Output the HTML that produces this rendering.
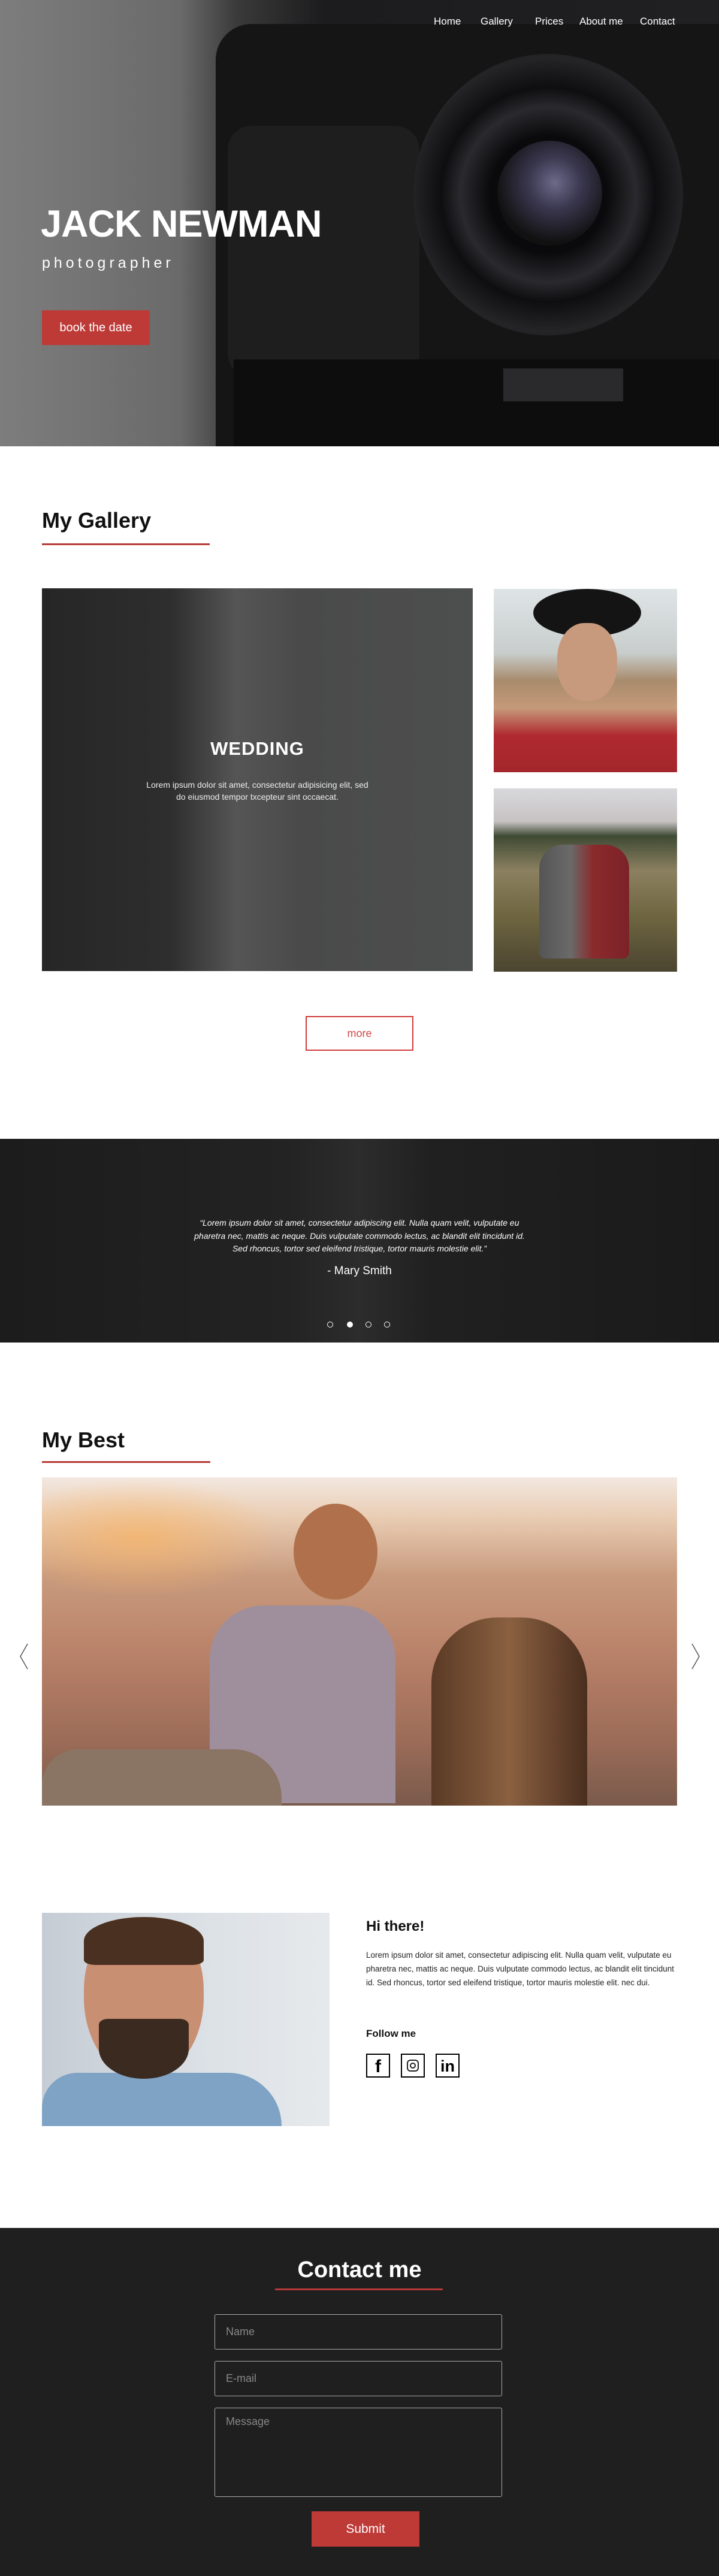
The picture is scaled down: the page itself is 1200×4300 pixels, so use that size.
<!DOCTYPE html>
<html><head><meta charset="utf-8"><style>
*{margin:0;padding:0;box-sizing:border-box}
body{width:1200px;height:4300px;position:relative;background:#fff;font-family:"Liberation Sans",sans-serif;overflow:hidden}
.a{position:absolute}
.hero{left:0;top:0;width:1200px;height:745px;background:linear-gradient(90deg,#7d7d7d 0%,#6a6a6a 25%,#3a3a3a 33%,#1c1c1e 45%,#202022 100%);overflow:hidden}
.nav{top:26px;color:#fff;font-size:17px}
.h2{font-size:36px;font-weight:bold;color:#111}
.ul{height:3px;background:#b73a36}
</style></head><body>
<div class="a hero">
  <div class="a" style="left:360px;top:40px;width:900px;height:720px;background:#151516;border-radius:60px 0 0 0"></div>
  <div class="a" style="left:380px;top:210px;width:320px;height:420px;background:#1e1e1f;border-radius:40px"></div>
  <div class="a" style="left:690px;top:90px;width:450px;height:470px;border-radius:50%;background:radial-gradient(circle,#0a0a0c 30%,#2a2a2e 45%,#0e0e10 55%,#242426 70%,#101012 100%)"></div>
  <div class="a" style="left:830px;top:235px;width:175px;height:175px;border-radius:50%;background:radial-gradient(circle at 55% 40%,#6d6a8a 0%,#3b3850 30%,#111 70%)"></div>
  <div class="a" style="left:390px;top:600px;width:810px;height:145px;background:#0d0d0e"></div>
  <div class="a" style="left:840px;top:615px;width:200px;height:55px;background:#2a2a2c"></div>
  <div class="a nav" style="left:724px">Home</div>
  <div class="a nav" style="left:802px">Gallery</div>
  <div class="a nav" style="left:893px">Prices</div>
  <div class="a nav" style="left:967px">About me</div>
  <div class="a nav" style="left:1068px">Contact</div>
  <div class="a" style="left:68px;top:338px;color:#fff;font-size:63px;font-weight:bold;letter-spacing:-1px">JACK NEWMAN</div>
  <div class="a" style="left:70px;top:425px;color:#fff;font-size:25px;letter-spacing:6px">photographer</div>
  <div class="a" style="left:70px;top:518px;width:180px;height:58px;background:#bd3a37;color:#fff;font-size:20px;line-height:58px;text-align:center">book the date</div>
</div>

<div class="a h2" style="left:70px;top:848px">My Gallery</div>
<div class="a ul" style="left:70px;top:907px;width:280px"></div>
<div class="a" style="left:70px;top:982px;width:719px;height:639px;background:linear-gradient(90deg,#262626 0%,#2e2e2e 30%,#555 45%,#4a4a4a 60%,#4d4e4e 100%)"></div>
<div class="a" style="left:70px;top:1232px;width:719px;text-align:center;color:#fff;font-size:31px;font-weight:bold;letter-spacing:1px">WEDDING</div>
<div class="a" style="left:70px;top:1300px;width:719px;text-align:center;color:#eee;font-size:14px;line-height:20px">Lorem ipsum dolor sit amet, consectetur adipisicing elit, sed<br>do eiusmod tempor txcepteur sint occaecat.</div>
<div class="a" style="left:824px;top:983px;width:306px;height:306px;background:linear-gradient(180deg,#dfe4e6 0%,#c8cdcc 35%,#a88b6c 50%,#c59a7a 65%,#b02a30 80%,#a3262b 100%)"></div>
<div class="a" style="left:890px;top:983px;width:180px;height:80px;border-radius:50%;background:#141414"></div>
<div class="a" style="left:930px;top:1040px;width:100px;height:130px;border-radius:45%;background:#c79a7d"></div>
<div class="a" style="left:824px;top:1316px;width:306px;height:306px;background:linear-gradient(180deg,#d8d8dc 0%,#c7c3c3 18%,#3f4a34 26%,#8b8060 45%,#6e6540 70%,#4b4430 100%)"></div>
<div class="a" style="left:900px;top:1410px;width:150px;height:190px;background:linear-gradient(90deg,#555 0%,#6a6a6a 35%,#8a2a2c 60%,#7c2228 100%);border-radius:40px 40px 10px 10px"></div>
<div class="a" style="left:510px;top:1696px;width:180px;height:58px;border:2px solid #d03a3a;color:#d04848;font-size:18px;line-height:54px;text-align:center">more</div>

<div class="a" style="left:0;top:1901px;width:1200px;height:340px;background:linear-gradient(90deg,#1c1c1c 0%,#232323 40%,#2c2c2c 50%,#202020 60%,#1a1a1a 100%)"></div>
<div class="a" style="left:0;top:2031px;width:1200px;text-align:center;color:#fff;font-size:14px;font-style:italic;line-height:21.5px;white-space:nowrap">“Lorem ipsum dolor sit amet, consectetur adipiscing elit. Nulla quam velit, vulputate eu<br>pharetra nec, mattis ac neque. Duis vulputate commodo lectus, ac blandit elit tincidunt id.<br>Sed rhoncus, tortor sed eleifend tristique, tortor mauris molestie elit.”</div>
<div class="a" style="left:0;top:2111px;width:1200px;text-align:center;color:#fff;font-size:19px">- Mary Smith</div>
<div class="a" style="left:546px;top:2206px;width:10px;height:10px;border:1.5px solid #fff;border-radius:50%"></div>
<div class="a" style="left:579px;top:2206px;width:10px;height:10px;background:#fff;border-radius:50%"></div>
<div class="a" style="left:610px;top:2206px;width:10px;height:10px;border:1.5px solid #fff;border-radius:50%"></div>
<div class="a" style="left:641px;top:2206px;width:10px;height:10px;border:1.5px solid #fff;border-radius:50%"></div>

<div class="a h2" style="left:70px;top:2383px">My Best</div>
<div class="a ul" style="left:70px;top:2439px;width:281px"></div>
<div class="a" style="left:70px;top:2466px;width:1060px;height:548px;background:linear-gradient(180deg,#f3e8e0 0%,#e9cdb4 12%,#c99b7e 30%,#b88068 55%,#9c6c58 80%,#7a5a4c 100%)"></div>
<div class="a" style="left:70px;top:2466px;width:400px;height:200px;background:radial-gradient(ellipse at 40% 50%,rgba(250,180,100,.7),rgba(250,180,100,0) 70%)"></div>
<div class="a" style="left:350px;top:2680px;width:310px;height:330px;background:#9f8f9d;border-radius:90px 90px 0 0"></div>
<div class="a" style="left:490px;top:2510px;width:140px;height:160px;background:#b0704c;border-radius:50%"></div>
<div class="a" style="left:720px;top:2700px;width:260px;height:314px;background:linear-gradient(90deg,#5a3a25,#8a6040,#4a2e1e);border-radius:110px 110px 0 0"></div>
<div class="a" style="left:70px;top:2920px;width:400px;height:94px;background:#8a7464;border-radius:60px 80px 0 0"></div>
<svg class="a" style="left:28px;top:2740px" width="24" height="50"><polyline points="18,4 6,25 18,46" fill="none" stroke="#555" stroke-width="1.5"/></svg>
<svg class="a" style="left:1149px;top:2740px" width="24" height="50"><polyline points="6,4 18,25 6,46" fill="none" stroke="#555" stroke-width="1.5"/></svg>

<div class="a" style="left:70px;top:3193px;width:480px;height:356px;background:linear-gradient(90deg,#c5ccd4 0%,#dde2e7 60%,#e6e9ec 100%)"></div>
<div class="a" style="left:70px;top:3460px;width:400px;height:89px;background:#7fa3c5;border-radius:80px 120px 0 0"></div>
<div class="a" style="left:140px;top:3200px;width:200px;height:270px;background:#c98f72;border-radius:45% 45% 50% 50%"></div>
<div class="a" style="left:140px;top:3200px;width:200px;height:80px;background:#4a3020;border-radius:50% 50% 10% 10%"></div>
<div class="a" style="left:165px;top:3370px;width:150px;height:100px;background:#3a2a20;border-radius:10% 10% 50% 50%"></div>
<div class="a" style="left:611px;top:3202px;font-size:24px;font-weight:bold;color:#111">Hi there!</div>
<div class="a" style="left:611px;top:3252px;width:530px;font-size:13.5px;line-height:23px;color:#222">Lorem ipsum dolor sit amet, consectetur adipiscing elit. Nulla quam velit, vulputate eu pharetra nec, mattis ac neque. Duis vulputate commodo lectus, ac blandit elit tincidunt id. Sed rhoncus, tortor sed eleifend tristique, tortor mauris molestie elit. nec dui.</div>
<div class="a" style="left:611px;top:3385px;font-size:17px;font-weight:bold;color:#111">Follow me</div>
<div class="a" style="left:611px;top:3428px;width:40px;height:40px;border:2px solid #000;text-align:center;font-size:30px;font-weight:bold;line-height:40px">f</div>
<div class="a" style="left:669px;top:3428px;width:40px;height:40px;border:2px solid #000"><div class="a" style="left:8px;top:8px;width:20px;height:20px;border:2.5px solid #222;border-radius:6px"></div><div class="a" style="left:13px;top:13px;width:10px;height:10px;border:2.5px solid #222;border-radius:50%"></div></div>
<div class="a" style="left:727px;top:3428px;width:40px;height:40px;border:2px solid #000;text-align:center;font-size:27px;font-weight:bold;line-height:38px">in</div>

<div class="a" style="left:0;top:3719px;width:1200px;height:581px;background:#1f1f20"></div>
<div class="a" style="left:0;top:3768px;width:1200px;text-align:center;color:#fff;font-size:38px;font-weight:bold">Contact me</div>
<div class="a ul" style="left:459px;top:3820px;width:280px"></div>
<div class="a" style="left:358px;top:3863px;width:480px;height:59px;border:1px solid #aaa;border-radius:3px;color:#888;font-size:18px;padding:18px 18px">Name</div>
<div class="a" style="left:358px;top:3941px;width:480px;height:59px;border:1px solid #aaa;border-radius:3px;color:#888;font-size:18px;padding:18px 18px">E-mail</div>
<div class="a" style="left:358px;top:4019px;width:480px;height:149px;border:1px solid #aaa;border-radius:3px;color:#888;font-size:18px;padding:12px 18px">Message</div>
<div class="a" style="left:520px;top:4192px;width:180px;height:59px;background:#bd3a37;color:#fff;font-size:21px;line-height:59px;text-align:center">Submit</div>
</body></html>
